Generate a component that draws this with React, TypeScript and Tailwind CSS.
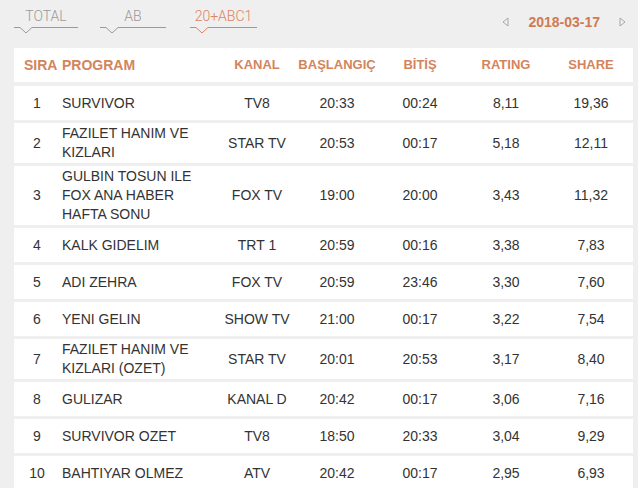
import React from 'react';

type Row = {
  sira: number;
  program: string;
  kanal: string;
  start: string;
  end: string;
  rating: string;
  share: string;
};

const rows: Row[] = [
  { sira: 1, program: 'SURVIVOR', kanal: 'TV8', start: '20:33', end: '00:24', rating: '8,11', share: '19,36' },
  { sira: 2, program: 'FAZILET HANIM VE KIZLARI', kanal: 'STAR TV', start: '20:53', end: '00:17', rating: '5,18', share: '12,11' },
  { sira: 3, program: 'GULBIN TOSUN ILE FOX ANA HABER HAFTA SONU', kanal: 'FOX TV', start: '19:00', end: '20:00', rating: '3,43', share: '11,32' },
  { sira: 4, program: 'KALK GIDELIM', kanal: 'TRT 1', start: '20:59', end: '00:16', rating: '3,38', share: '7,83' },
  { sira: 5, program: 'ADI ZEHRA', kanal: 'FOX TV', start: '20:59', end: '23:46', rating: '3,30', share: '7,60' },
  { sira: 6, program: 'YENI GELIN', kanal: 'SHOW TV', start: '21:00', end: '00:17', rating: '3,22', share: '7,54' },
  { sira: 7, program: 'FAZILET HANIM VE KIZLARI (OZET)', kanal: 'STAR TV', start: '20:01', end: '20:53', rating: '3,17', share: '8,40' },
  { sira: 8, program: 'GULIZAR', kanal: 'KANAL D', start: '20:42', end: '00:17', rating: '3,06', share: '7,16' },
  { sira: 9, program: 'SURVIVOR OZET', kanal: 'TV8', start: '18:50', end: '20:33', rating: '3,04', share: '9,29' },
  { sira: 10, program: 'BAHTIYAR OLMEZ', kanal: 'ATV', start: '20:42', end: '00:17', rating: '2,95', share: '6,93' },
];

const grid = 'grid grid-cols-[46px_157px_80px_80px_86px_86px_84px]';

function Tab({ label, active, width }: { label: string; active?: boolean; width: number }) {
  const color = active ? '#e0825c' : '#9a9a9a';
  return (
    <div className="flex flex-col items-center" style={{ width }}>
      <span
        className="font-[family-name:Roboto] font-light text-[14px] leading-[16px] pt-[8px] h-[26px]"
        style={{ color }}
      >
        {label}
      </span>
      <svg width={width} height="8" viewBox={`0 0 ${width} 8`} fill="none">
        <path
          d={`M0 1.5 H6 L12 7 L18 1.5 H${width}`}
          stroke={color}
          strokeWidth="1"
        />
      </svg>
    </div>
  );
}

function Arrow({ dir }: { dir: 'left' | 'right' }) {
  return (
    <svg width="7" height="10" viewBox="0 0 7 10" fill="none">
      <path
        d={dir === 'left' ? 'M6 1 L1 5 L6 9 Z' : 'M1 1 L6 5 L1 9 Z'}
        stroke="#a8a8a8"
        strokeWidth="1"
        strokeLinejoin="round"
      />
    </svg>
  );
}

function App() {
  return (
    <div className="w-[638px] h-[488px] bg-[#efefef] overflow-hidden font-[family-name:Liberation_Sans,Arial,sans-serif]">
      <div className="flex h-[48px] pl-[14px]">
        <Tab label="TOTAL" width={64} />
        <div className="ml-[22px]">
          <Tab label="AB" width={66} />
        </div>
        <div className="ml-[24px]">
          <Tab label="20+ABC1" width={67} active />
        </div>
        <div className="ml-auto mr-[12px] flex items-center h-[44px] gap-[19px]">
          <Arrow dir="left" />
          <span className="text-[14px] font-bold text-[#cf7a52]">2018-03-17</span>
          <Arrow dir="right" />
        </div>
      </div>

      <div className="ml-[14px] w-[619px] flex flex-col gap-[3px]">
        <div className={`${grid} h-[34px] bg-white mb-px items-center text-[13px] font-bold text-[#d3845c]`}>
          <div className="pl-[10px] text-[14px]">SIRA</div>
          <div className="pl-[2px] text-[14px]">PROGRAM</div>
          <div className="text-center">KANAL</div>
          <div className="text-center whitespace-nowrap">BAŞLANGIÇ</div>
          <div className="text-center">BİTİŞ</div>
          <div className="text-center">RATING</div>
          <div className="text-center">SHARE</div>
        </div>
        {rows.map((r) => (
          <div
            key={r.sira}
            className={`${grid} min-h-[34px] py-px bg-white items-center text-[14px] leading-[19px] text-[#333]`}
          >
            <div className="text-center">{r.sira}</div>
            <div className="pl-[2px] pr-[14px]">{r.program}</div>
            <div className="text-center">{r.kanal}</div>
            <div className="text-center">{r.start}</div>
            <div className="text-center">{r.end}</div>
            <div className="text-center">{r.rating}</div>
            <div className="text-center">{r.share}</div>
          </div>
        ))}
      </div>
    </div>
  );
}

export default App;
